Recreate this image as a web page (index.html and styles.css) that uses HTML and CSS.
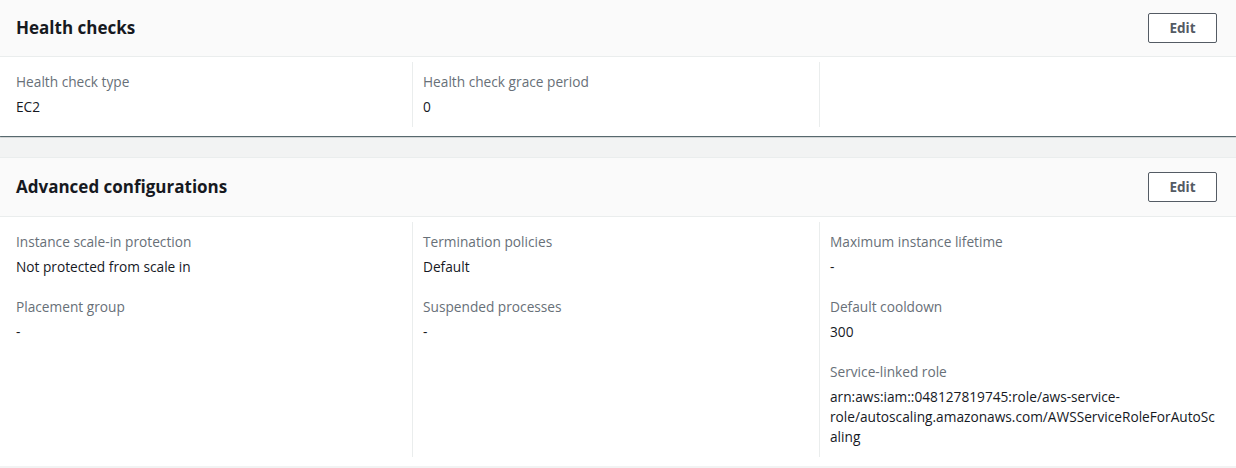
FILE: index.html
```html
<!DOCTYPE html>
<html>
<head>
<meta charset="utf-8">
<link rel="stylesheet" href="styles.css">
</head>
<body>
<div class="page">
  <section class="container">
    <header class="container-header header-first">
      <h2 class="title">Health checks</h2>
      <button class="btn">Edit</button>
    </header>
    <div class="columns">
      <div class="col">
        <div class="kv">
          <div class="key">Health check type</div>
          <div class="value">EC2</div>
        </div>
      </div>
      <div class="col">
        <div class="kv">
          <div class="key">Health check grace period</div>
          <div class="value">0</div>
        </div>
      </div>
      <div class="col"></div>
    </div>
  </section>

  <section class="container">
    <header class="container-header">
      <h2 class="title">Advanced configurations</h2>
      <button class="btn">Edit</button>
    </header>
    <div class="columns">
      <div class="col">
        <div class="kv">
          <div class="key">Instance scale-in protection</div>
          <div class="value">Not protected from scale in</div>
        </div>
        <div class="kv">
          <div class="key">Placement group</div>
          <div class="value">-</div>
        </div>
      </div>
      <div class="col">
        <div class="kv">
          <div class="key">Termination policies</div>
          <div class="value">Default</div>
        </div>
        <div class="kv">
          <div class="key">Suspended processes</div>
          <div class="value">-</div>
        </div>
      </div>
      <div class="col">
        <div class="kv">
          <div class="key">Maximum instance lifetime</div>
          <div class="value">-</div>
        </div>
        <div class="kv">
          <div class="key">Default cooldown</div>
          <div class="value">300</div>
        </div>
        <div class="kv">
          <div class="key">Service-linked role</div>
          <div class="value arn">arn:aws:iam::048127819745:role/aws-service-role/autoscaling.amazonaws.com/AWSServiceRoleForAutoScaling</div>
        </div>
      </div>
    </div>
  </section>
</div>
</body>
</html>
```

FILE: styles.css
```css
* { box-sizing: border-box; }
html, body {
  margin: 0;
  padding: 0;
  background: #f2f3f3;
  font-family: "Open Sans", "Noto Sans", "Liberation Sans", sans-serif;
  font-size: 13.7px;
  color: #16191f;
}
.page {
  display: flex;
  flex-direction: column;
  gap: 21px;
}
.container {
  background: #ffffff;
  border-top: 1px solid #eaeded;
  box-shadow: 0 1px 1px 0 rgba(0, 28, 36, 0.5), 1px 1px 1px 0 rgba(0, 28, 36, 0.15), -1px 1px 1px 0 rgba(0, 28, 36, 0.15);
}
.page > .container:first-child { border-top: none; }
.container-header {
  background: #fafafa;
  border-bottom: 1px solid #eaeded;
  display: flex;
  align-items: center;
  justify-content: space-between;
  padding: 0 19px 0 16px;
  height: 59px;
}
.header-first { height: 57px; }
.title {
  margin: 0;
  font-size: 17px;
  font-weight: 700;
  color: #16191f;
  line-height: 22px;
}
.btn {
  width: 69px;
  height: 30px;
  background: #ffffff;
  border: 1px solid #545b64;
  border-radius: 2px;
  font-family: inherit;
  font-size: 13.5px;
  font-weight: 700;
  color: #545b64;
  padding: 0;
}
.columns {
  display: grid;
  grid-template-columns: 412px 407px 1fr;
  padding: 5px 0 9px;
}
.col {
  display: flex;
  flex-direction: column;
  gap: 20px;
  padding: 10px 17px 10px 10px;
  border-left: 1px solid #eaeded;
}
.col:first-child {
  border-left: none;
  padding-left: 16px;
}
.kv {
  display: flex;
  flex-direction: column;
  gap: 5px;
}
.key {
  color: #687078;
  line-height: 20px;
}
.value {
  color: #16191f;
  line-height: 20px;
}
.arn {
  overflow-wrap: anywhere;
}
```
